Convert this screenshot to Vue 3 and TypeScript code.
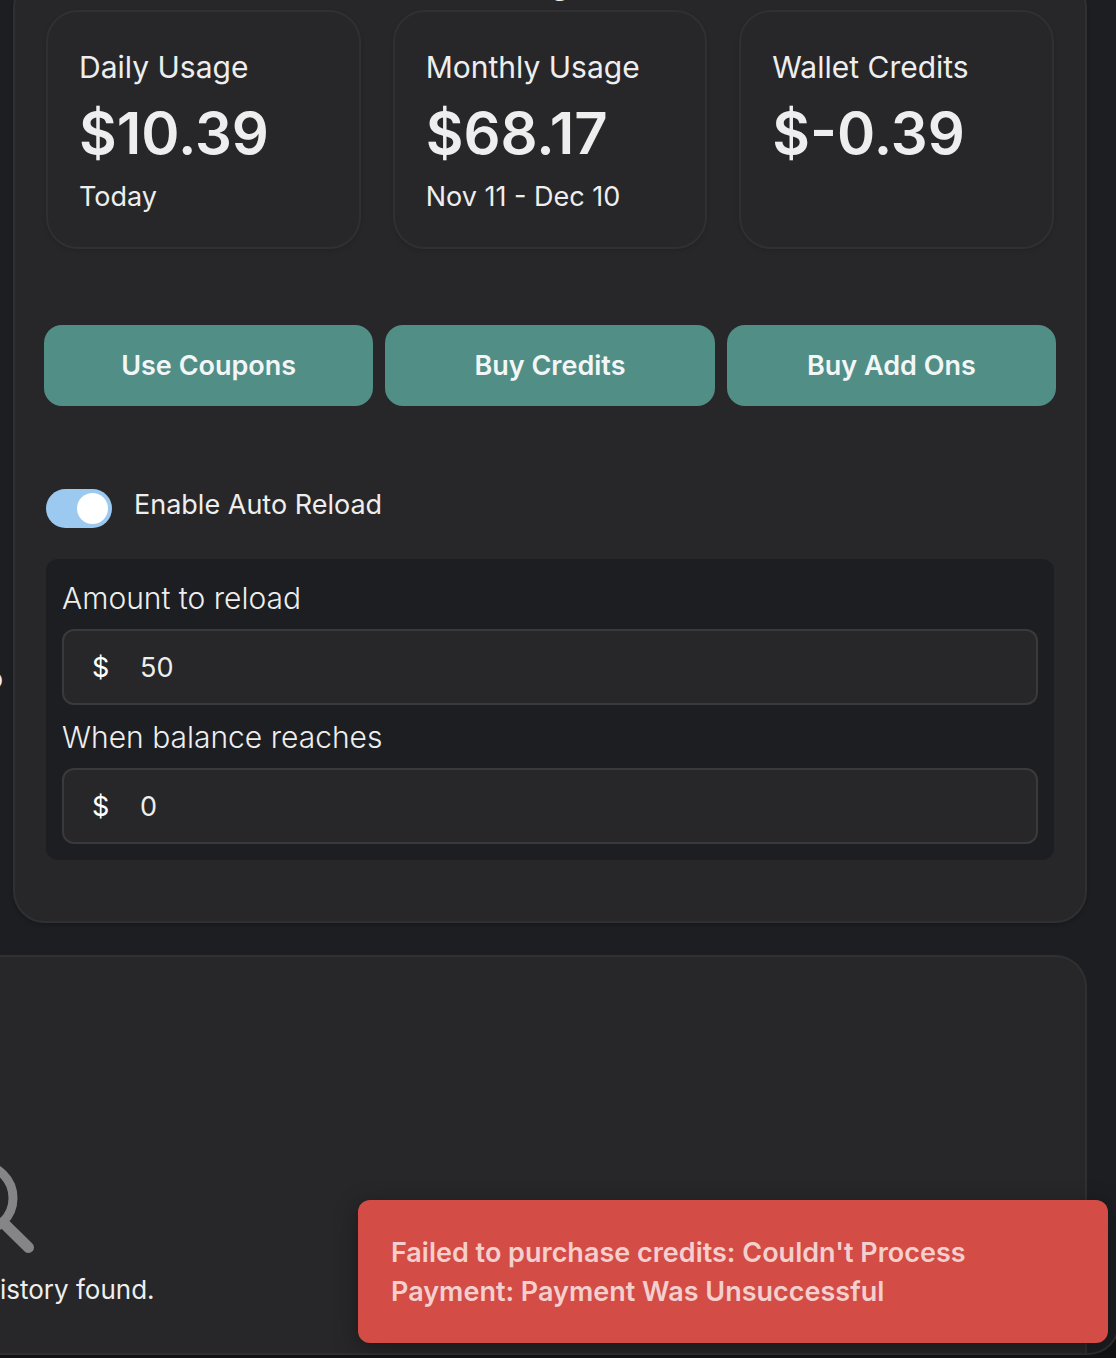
<script setup lang="ts">
import { ref } from 'vue'

interface Stat {
  label: string
  value: string
  note: string
}

const stats: Stat[] = [
  { label: 'Daily Usage', value: '$10.39', note: 'Today' },
  { label: 'Monthly Usage', value: '$68.17', note: 'Nov 11 - Dec 10' },
  { label: 'Wallet Credits', value: '$-0.39', note: '' },
]

const actions: string[] = ['Use Coupons', 'Buy Credits', 'Buy Add Ons']

const autoReload = ref(true)
const reloadAmount = ref('50')
const threshold = ref('0')
</script>

<template>
  <div class="frame">
    <main class="page">
      <div class="columns">
        <aside class="side"><span>o</span></aside>
        <section class="card usage">
          <h2 class="heading">g</h2>
          <div class="stats">
            <article v-for="s in stats" :key="s.label" class="stat">
              <h3 class="stat-label">{{ s.label }}</h3>
              <p class="stat-value">{{ s.value }}</p>
              <p class="stat-note">{{ s.note }}</p>
            </article>
          </div>
          <div class="actions">
            <button v-for="a in actions" :key="a" type="button" class="action">{{ a }}</button>
          </div>
          <label class="toggle">
            <input v-model="autoReload" type="checkbox" class="switch" />
            <span>Enable Auto Reload</span>
          </label>
          <div v-if="autoReload" class="reload">
            <label class="field-label" for="amount">Amount to reload</label>
            <div class="field">
              <span class="currency">$</span>
              <input id="amount" v-model="reloadAmount" type="text" inputmode="decimal" class="field-input" />
            </div>
            <label class="field-label" for="threshold">When balance reaches</label>
            <div class="field">
              <span class="currency">$</span>
              <input id="threshold" v-model="threshold" type="text" inputmode="decimal" class="field-input" />
            </div>
          </div>
        </section>
      </div>
      <section class="card history">
        <svg class="search" viewBox="0 0 36 96" width="36" height="96" fill="none" aria-hidden="true">
          <circle cx="-20.5" cy="39" r="33.5" stroke="#858587" stroke-width="9" />
          <path d="M3 63.5 L28.5 88.5" stroke="#858587" stroke-width="11" stroke-linecap="round" />
        </svg>
        <p class="empty">istory found.</p>
      </section>
    </main>
    <div class="toast" role="alert">Failed to purchase credits: Couldn't Process Payment: Payment Was Unsuccessful</div>
  </div>
</template>

<style>
body {
  margin: 0;
  background: #111214;
  overflow: hidden;
}
</style>

<style scoped>
* {
  box-sizing: border-box;
}

.frame {
  position: relative;
  margin-right: -4px;
  border: 2px solid #303032;
  border-width: 0 2px 2px 0;
  border-radius: 0 0 32px 0;
  background: #1d1e22;
  color: #eeeeee;
  font-family: Inter, 'Liberation Sans', sans-serif;
  font-size: 27px;
}

.page {
  display: flex;
  flex-direction: column;
  gap: 32px;
  padding-right: 31px;
  overflow: hidden;
}

.columns {
  display: flex;
}

.side {
  display: flex;
  flex: 0 0 13px;
  align-items: center;
  justify-content: flex-end;
  padding: 434px 10px 0 0;
  overflow: hidden;
  font-size: 26px;
}

.card {
  border: 2px solid #303032;
  background: #272729;
}

.usage {
  flex: 1;
  margin-top: -24px;
  padding: 0 31px 61px;
  border-radius: 32px;
  box-shadow: 0 2px 4px rgba(0, 0, 0, 0.2);
}

.heading {
  margin: -15px 0 7px;
  padding-left: 20px;
  text-align: center;
  font-size: 32px;
  line-height: 40px;
  font-weight: 600;
}

.stats {
  display: grid;
  grid-template-columns: repeat(3, 1fr);
  gap: 32px;
}

.stat {
  height: 239px;
  padding: 35px 31px 0;
  border: 2px solid #303032;
  border-radius: 32px;
  box-shadow: 0 2px 4px rgba(0, 0, 0, 0.12);
}

.stat-label,
.stat-value,
.stat-note {
  margin: 0;
  white-space: nowrap;
}

.stat-label {
  font-size: 30px;
  line-height: 40px;
  font-weight: 400;
}

.stat-value {
  margin-top: 12px;
  font-size: 58px;
  line-height: 68px;
  font-weight: 600;
}

.stat-note {
  margin-top: 10px;
  line-height: 40px;
}

.actions {
  display: grid;
  grid-template-columns: repeat(3, 1fr);
  gap: 12px;
  margin: 76px -2px 0;
}

.action {
  height: 81px;
  padding: 0;
  border: 0;
  border-radius: 18px;
  background: #518e86;
  color: #f2f6f6;
  font-family: inherit;
  font-size: 27px;
  font-weight: 600;
}

.toggle {
  display: flex;
  align-items: flex-end;
  gap: 22px;
  width: max-content;
  margin-top: 76px;
}

.toggle span {
  line-height: 46px;
}

.switch {
  width: 66px;
  height: 39px;
  margin: 0;
  padding: 4px;
  border-radius: 20px;
  background: #57575a;
  appearance: none;
}

.switch::before {
  content: '';
  display: block;
  width: 31px;
  height: 31px;
  border-radius: 50%;
  background: #ffffff;
}

.switch:checked {
  background: #9bc9ef;
}

.switch:checked::before {
  margin-left: auto;
}

.reload {
  margin-top: 31px;
  padding: 16px;
  border-radius: 12px;
  background: #1d1e22;
}

.field-label {
  display: block;
  font-size: 30px;
  line-height: 46px;
  font-weight: 350;
}

.field {
  display: flex;
  align-items: center;
  height: 76px;
  margin-top: 8px;
  padding: 0 28px;
  border: 2px solid #3a3a3c;
  border-radius: 12px;
  background: #272729;
}

.field + .field-label {
  margin-top: 9px;
}

.currency {
  width: 48px;
  color: #ffffff;
}

.field-input {
  flex: 1;
  min-width: 0;
  padding: 0;
  border: 0;
  outline: 0;
  background: transparent;
  color: inherit;
  font: inherit;
}

.history {
  height: 398px;
  padding-top: 202px;
  border-width: 2px 2px 0 0;
  border-radius: 0 32px 0 0;
}

.search {
  display: block;
}

.empty {
  margin: 15px 0 0;
  font-size: 26px;
  line-height: 40px;
}

.toast {
  position: absolute;
  right: 10px;
  bottom: 10px;
  width: 750px;
  padding: 33px 33px 32px;
  border-radius: 12px;
  background: #d34c46;
  box-shadow: 0 6px 24px rgba(0, 0, 0, 0.35);
  color: #f4cfcd;
  line-height: 39px;
  font-weight: 600;
}
</style>
